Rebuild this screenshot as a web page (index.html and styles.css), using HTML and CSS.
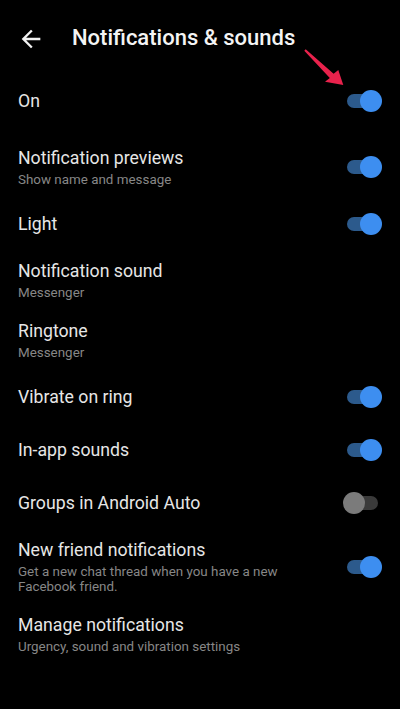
FILE: index.html
```html
<!DOCTYPE html>
<html lang="en">
<head>
<meta charset="utf-8">
<title>Notifications &amp; sounds</title>
<link rel="stylesheet" href="styles.css">
</head>
<body>
<div class="screen">
  <header class="header">
    <svg class="back" viewBox="0 0 24 24" width="28" height="28"><path d="M20 11H7.83l5.59-5.59L12 4l-8 8 8 8 1.41-1.41L7.83 13H20v-2z" fill="#f2f2f2"/></svg>
    <h1 class="title">Notifications &amp; sounds</h1>
  </header>

  <div class="row first">
    <div class="text"><div class="label">On</div></div>
    <span class="toggle on"><span class="track"></span><span class="thumb"></span></span>
  </div>

  <div class="row two">
    <div class="text"><div class="label">Notification previews</div><div class="sub">Show name and message</div></div>
    <span class="toggle on"><span class="track"></span><span class="thumb"></span></span>
  </div>

  <div class="row">
    <div class="text"><div class="label">Light</div></div>
    <span class="toggle on"><span class="track"></span><span class="thumb"></span></span>
  </div>

  <div class="row two">
    <div class="text"><div class="label">Notification sound</div><div class="sub">Messenger</div></div>
  </div>

  <div class="row two">
    <div class="text"><div class="label">Ringtone</div><div class="sub">Messenger</div></div>
  </div>

  <div class="row">
    <div class="text"><div class="label">Vibrate on ring</div></div>
    <span class="toggle on"><span class="track"></span><span class="thumb"></span></span>
  </div>

  <div class="row">
    <div class="text"><div class="label">In-app sounds</div></div>
    <span class="toggle on"><span class="track"></span><span class="thumb"></span></span>
  </div>

  <div class="row">
    <div class="text"><div class="label">Groups in Android Auto</div></div>
    <span class="toggle off"><span class="track"></span><span class="thumb"></span></span>
  </div>

  <div class="row two">
    <div class="text"><div class="label">New friend notifications</div><div class="sub">Get a new chat thread when you have a new Facebook friend.</div></div>
    <span class="toggle on"><span class="track"></span><span class="thumb"></span></span>
  </div>

  <div class="row two">
    <div class="text"><div class="label">Manage notifications</div><div class="sub">Urgency, sound and vibration settings</div></div>
  </div>

  <svg class="pointer" width="400" height="120" viewBox="0 0 400 120">
    <polygon points="305.7,49.3 333.6,73.7 338.3,70 343.3,85 325,81.7 329.8,77.9 304.3,50.7" fill="#e8224c"/>
  </svg>
</div>
</body>
</html>
```

FILE: styles.css
```css
html, body {
  margin: 0;
  padding: 0;
  background: #000;
}

body {
  font-family: Roboto, "Noto Sans", "Liberation Sans", sans-serif;
  color: #e8e8e8;
}

.screen {
  position: relative;
  width: 400px;
  height: 709px;
  overflow: hidden;
  background: #000;
}

.header {
  display: flex;
  align-items: center;
  height: 74px;
  padding-left: 17px;
  box-sizing: border-box;
}

.back {
  display: block;
  flex: none;
  margin-top: 3px;
}

.title {
  margin: 2px 0 0 27px;
  font-size: 22px;
  font-weight: 500;
  color: #f4f4f4;
  line-height: 28px;
}

.row {
  display: flex;
  align-items: center;
  min-height: 53px;
  padding: 0 18px;
  box-sizing: border-box;
}

.row.first {
  margin-bottom: 10px;
}

.row.two {
  padding-top: 10px;
  padding-bottom: 10px;
}

.text {
  flex: 1;
  min-width: 0;
}

.label {
  font-size: 17.7px;
  line-height: 22px;
  color: #e6e6e6;
}

.sub {
  margin-top: 3px;
  font-size: 13.4px;
  line-height: 15px;
  color: #878787;
  max-width: 300px;
}

.toggle {
  position: relative;
  flex: none;
  width: 39px;
  height: 22px;
  margin-left: 12px;
}

.track {
  position: absolute;
  left: 4px;
  right: 4px;
  top: 4px;
  height: 14px;
  border-radius: 7px;
}

.thumb {
  position: absolute;
  top: 0;
  width: 22px;
  height: 22px;
  border-radius: 50%;
}

.toggle.on .track { background: #2c5a8c; }
.toggle.on .thumb { right: 0; background: #3d8ef0; }

.toggle.off .track { background: #3a3a3a; }
.toggle.off .thumb { left: 0; background: #7b7b7b; }

.pointer {
  position: absolute;
  left: 0;
  top: 0;
  pointer-events: none;
}
```
